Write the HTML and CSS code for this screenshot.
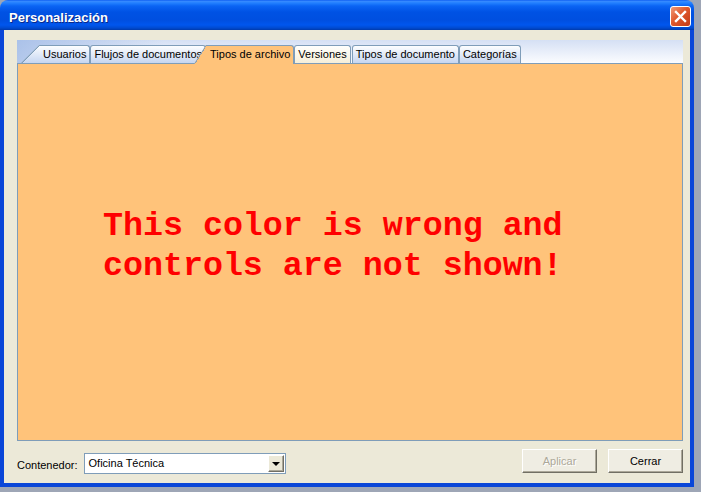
FILE: index.html
```html
<!DOCTYPE html>
<html lang="es">

<head>
    <meta charset="UTF-8">
    <meta name="viewport" content="width=device-width, initial-scale=1.0">
    <title>Personalización</title>
    <link rel="stylesheet" href="styles.css">
</head>

<body>
    <div class="ventana">
        <div class="barra-titulo">
            <span class="titulo">Personalización</span>
            <button class="cerrar" title="Cerrar">
                <svg width="19" height="19" viewBox="0 0 19 19">
                    <path d="M5 5 L14 14 M14 5 L5 14" stroke="#fff" stroke-width="2.4" stroke-linecap="square" fill="none" />
                </svg>
            </button>
        </div>

        <div class="cuerpo">
            <div class="pestanas">
                <div class="tira">
                    <span class="pestana inclinada">Usuarios</span>
                    <span class="pestana">Flujos de documentos</span>
                    <span class="pestana inclinada activa">Tipos de archivo</span>
                    <span class="pestana encima">Versiones</span>
                    <span class="pestana">Tipos de documento</span>
                    <span class="pestana">Categorías</span>
                </div>
                <div class="panel">
                    <p class="aviso">This color is wrong and<br>controls are not shown!</p>
                </div>
            </div>

            <div class="pie">
                <label class="etiqueta" for="contenedor">Contenedor:</label>
                <div class="combo" id="contenedor">
                    <span class="combo-texto">Oficina Técnica</span>
                    <span class="combo-flecha"></span>
                </div>
                <div class="botones">
                    <button class="boton" disabled>Aplicar</button>
                    <button class="boton">Cerrar</button>
                </div>
            </div>
        </div>
    </div>
</body>

</html>
```

FILE: styles.css
```css
* {
    box-sizing: border-box;
}

body {
    margin: 0;
    background-color: #9ea6b6;
    font-family: "Liberation Sans", Arial, sans-serif;
    font-size: 11px;
    color: #000;
}

/* ventana estilo XP */
.ventana {
    width: 694px;
    height: 487px;
    display: flex;
    flex-direction: column;
    border-radius: 8px 8px 0 0;
    overflow: hidden;
}

.barra-titulo {
    height: 30px;
    flex: none;
    display: flex;
    align-items: flex-start;
    justify-content: space-between;
    padding: 0 3px 0 9px;
    background: linear-gradient(to bottom, #0050ee 0, #3a8cff 1px, #2280ff 3px, #0a64f4 6px, #0052e4 12px, #004fe0 20px, #0056ee 25px, #004ad0 28px, #003aac 30px);
}

.titulo {
    padding-top: 10px;
    font-size: 13px;
    font-weight: bold;
    line-height: 15px;
    color: #fff;
    text-shadow: 1px 1px 0 #0a2a8a;
}

.cerrar {
    width: 21px;
    height: 21px;
    margin-top: 6px;
    padding: 0;
    display: flex;
    align-items: center;
    justify-content: center;
    border: 1px solid #fff;
    border-radius: 3px;
    background: linear-gradient(135deg, #f09a78, #e0582c 45%, #c33a16);
}

.cuerpo {
    flex: 1;
    display: flex;
    flex-direction: column;
    padding: 10px 7px 0 13px;
    background-color: #ece9d8;
    border: 4px solid #0a46d8;
    border-top: none;
}

/* pestañas */
.pestanas {
    height: 401px;
    display: flex;
    flex-direction: column;
}

.tira {
    height: 23px;
    flex: none;
    display: flex;
    align-items: flex-end;
    padding-left: 22px;
    background:
        linear-gradient(to right, rgba(160, 186, 230, 0.8), rgba(160, 186, 230, 0) 22%),
        linear-gradient(to bottom, #d5e0f4, #fbfcff);
}

.pestana {
    position: relative;
    height: 18px;
    padding: 0 3px;
    line-height: 16px;
    white-space: nowrap;
    border: 1px solid #7f9db9;
    border-bottom: none;
    border-radius: 3px 3px 0 0;
    background: linear-gradient(to bottom, #fdfeff, #c6d6f1);
}

.pestana.inclinada {
    border-left: none;
    border-top-left-radius: 0;
    padding-left: 4px;
}

.pestana.inclinada::before {
    content: '';
    position: absolute;
    left: -18px;
    top: -1px;
    width: 18px;
    height: 18px;
    clip-path: polygon(0 100%, 100% 0, 100% 100%);
    background:
        linear-gradient(to bottom right, transparent calc(50% - 0.6px), #7f9db9 calc(50% - 0.6px), #7f9db9 calc(50% + 0.9px), transparent calc(50% + 0.9px)),
        linear-gradient(to bottom, #fdfeff, #c6d6f1);
}

.pestana.activa {
    z-index: 2;
    height: 19px;
    margin-bottom: -1px;
    background: #ffc37a;
}

.pestana.activa::before {
    left: -12px;
    width: 12px;
    height: 19px;
    background:
        linear-gradient(to bottom right, transparent calc(50% - 0.6px), #7f9db9 calc(50% - 0.6px), #7f9db9 calc(50% + 0.9px), transparent calc(50% + 0.9px)),
        #ffc37a;
}

.pestana.encima {
    background: linear-gradient(to bottom, #fffffd, #f6efd9);
}

.pestana.encima + .pestana {
    margin-left: 1px;
}

.panel {
    flex: 1;
    border: 1px solid #7f9db9;
    background-color: #ffc37a;
}

.aviso {
    margin: 0;
    padding: 142px 0 0 85px;
    font-family: "Liberation Mono", "Courier New", monospace;
    font-size: 33.3px;
    font-weight: bold;
    line-height: 40px;
    color: #f00;
}

/* parte inferior */
.pie {
    flex: 1;
    display: flex;
    align-items: flex-start;
    padding-top: 8px;
}

.etiqueta {
    margin-top: 10px;
    margin-right: 6px;
    line-height: 13px;
}

.combo {
    width: 202px;
    height: 21px;
    margin-top: 4px;
    display: flex;
    align-items: center;
    padding: 1px;
    border: 1px solid #7f9db9;
    background-color: #fff;
}

.combo-texto {
    flex: 1;
    padding-left: 3px;
    line-height: 17px;
}

.combo-flecha {
    width: 16px;
    height: 17px;
    display: flex;
    align-items: center;
    justify-content: center;
    border: 1px solid;
    border-color: #fff #716f64 #716f64 #fff;
    box-shadow: inset -1px -1px 0 #aca899;
    background-color: #ece9d8;
}

.combo-flecha::after {
    content: '';
    border-left: 4px solid transparent;
    border-right: 4px solid transparent;
    border-top: 4px solid #000;
}

.botones {
    margin-left: auto;
    display: flex;
    gap: 11px;
}

.boton {
    width: 75px;
    height: 24px;
    padding: 0;
    font-family: "Liberation Sans", Arial, sans-serif;
    font-size: 11px;
    color: #000;
    border: 1px solid;
    border-color: #fff #716f64 #716f64 #fff;
    box-shadow: inset -1px -1px 0 #aca899;
    background-color: #efede3;
}

.boton:disabled {
    color: #aca899;
    text-shadow: 1px 1px 0 #fff;
}
```
